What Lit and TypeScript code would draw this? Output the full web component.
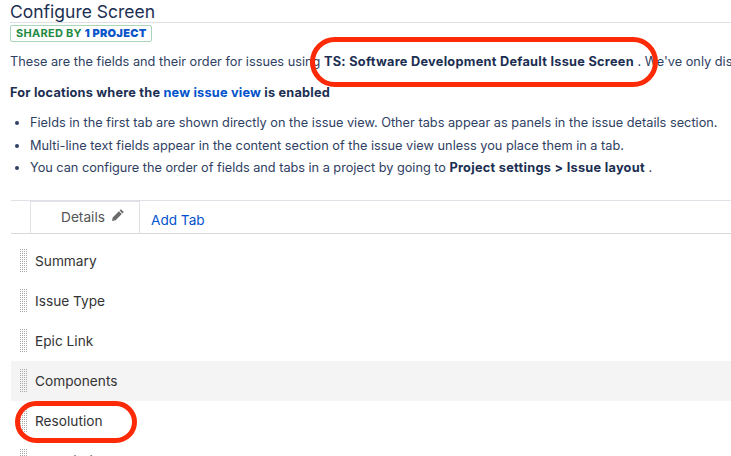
import { LitElement, html, css } from "lit";
import { customElement } from "lit/decorators.js";

@customElement("app-root")
export class AppRoot extends LitElement {
  static styles = css`
    :host { display: block; position: relative; width: 731px; height: 456px; overflow: hidden; background: #fff; font-family: Inter, "Liberation Sans", sans-serif; color: #2f4163; font-size: 12.75px; }
    .head { margin-left: 10px; height: 22px; border-bottom: 1px solid #dfe1e6; }
    h1 { margin: 0; font-size: 17.5px; font-weight: 400; line-height: 23px; color: #1c2f52; white-space: nowrap; }
    .lozenge { display: block; width: fit-content; box-sizing: border-box; margin: 2px 0 0 10px; height: 17px; line-height: 15px; padding: 0 5px; border: 1px solid #abd5bb; border-radius: 2px; font-size: 11px; letter-spacing: 0.27px; font-weight: 700; color: #1f8a42; white-space: nowrap; }
    .lozenge b { color: #0b55c9; }
    .line { margin: 0 0 0 10px; white-space: nowrap; line-height: 18px; }
    .intro { margin-top: 11px; }
    .bold { margin-top: 13px; font-weight: 700; letter-spacing: 0.2px; color: #1c2f52; }
    strong { font-weight: 700; letter-spacing: 0.27px; color: #1c2f52; }
    a { color: #0052cc; text-decoration: none; }
    ul { margin: 10px 0 0 0; padding: 0 0 0 30px; line-height: 22.5px; white-space: nowrap; }
    .tight { letter-spacing: -0.03px; }
    .tabs { margin: 20px 0 0 11px; height: 32px; border-top: 1px solid #dfe1e6; border-bottom: 1px solid #d8d8d8; display: flex; }
    .tab { width: 110px; box-sizing: border-box; margin-left: 19px; border: 1px solid #dfe1e6; border-bottom: 0; background: #fff; display: flex; align-items: center; gap: 6px; padding: 0 0 1px 30px; color: #555; font-size: 13.7px; }
    .tab svg { width: 14px; height: 14px; margin-top: -3px; }
    .add { margin: 10px 0 0 11px; font-size: 13.6px; line-height: 18px; }
    .rows { margin: 7px 0 0 11px; }
    .row { height: 40px; display: flex; align-items: center; gap: 7px; padding-left: 8px; color: #333; font-size: 13.7px; }
    .row.hl { background: #f4f4f4; }
    .grip { width: 8px; height: 23px; background-image: conic-gradient(#a8a8a8 25%, transparent 0); background-size: 2px 2px; margin-right: 1px; margin-top: -1px; }
    .oval { position: absolute; box-sizing: border-box; border: 5px solid #fc2a07; }
    .o1 { left: 310px; top: 37px; width: 348px; height: 50px; border-radius: 25px; }
    .o2 { left: 15px; top: 401px; width: 122px; height: 42px; border-radius: 21px; }
  `;
  render() {
    const rows = ["Summary", "Issue Type", "Epic Link", "Components", "Resolution", "Description"];
    return html`
      <div class="head"><h1>Configure Screen</h1></div>
      <span class="lozenge">SHARED BY <b>1 PROJECT</b></span>
      <p class="line intro">These are the fields and their order for issues using <strong>TS: Software Development Default Issue Screen</strong> . We've only displayed</p>
      <p class="line bold">For locations where the <a href="#">new issue view</a> is enabled</p>
      <ul>
        <li>Fields in the first tab are shown directly on the issue view. Other tabs appear as panels in the issue details section.</li>
        <li>Multi-line text fields appear in the content section of the issue view unless you place them in a tab.</li>
        <li class="tight">You can configure the order of fields and tabs in a project by going to <strong>Project settings &gt; Issue layout</strong> .</li>
      </ul>
      <div class="tabs">
        <div class="tab">Details
          <svg viewBox="0 0 14 14"><path fill="#6b6b6b" d="M9.9 1.2l2.9 2.9-1.3 1.3-2.9-2.9zM7.9 3.2l2.9 2.9-6.2 6.2-3.6.7.7-3.6z"/></svg>
        </div>
        <a class="add" href="#">Add Tab</a>
      </div>
      <div class="rows">
        ${rows.map((r) => html`<div class="row ${r === "Components" ? "hl" : ""}"><span class="grip"></span><span>${r}</span></div>`)}
      </div>
      <div class="oval o1"></div>
      <div class="oval o2"></div>
    `;
  }
}
